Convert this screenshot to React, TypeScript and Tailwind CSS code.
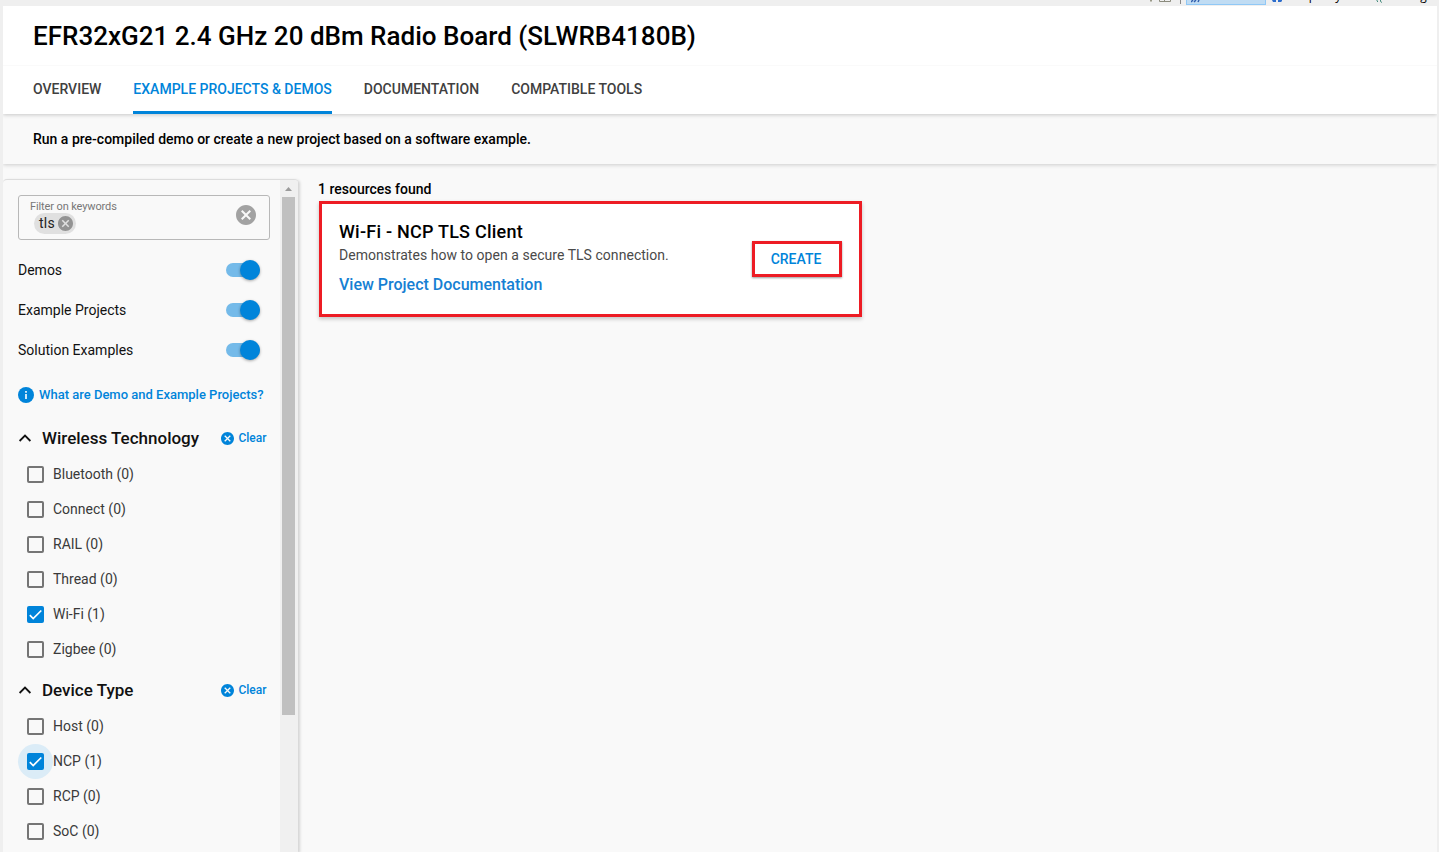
import React from "react";

const tabs = ["OVERVIEW", "EXAMPLE PROJECTS & DEMOS", "DOCUMENTATION", "COMPATIBLE TOOLS"];
const toggles = ["Demos", "Example Projects", "Solution Examples"];

type Option = { label: string; checked?: boolean; focused?: boolean };

const wireless: Option[] = [
  { label: "Bluetooth (0)" },
  { label: "Connect (0)" },
  { label: "RAIL (0)" },
  { label: "Thread (0)" },
  { label: "Wi-Fi (1)", checked: true },
  { label: "Zigbee (0)" },
];
const devices: Option[] = [
  { label: "Host (0)" },
  { label: "NCP (1)", checked: true, focused: true },
  { label: "RCP (0)" },
  { label: "SoC (0)" },
];

function CancelIcon({ className }: { className: string }) {
  return (
    <svg viewBox="2 2 20 20" className={className} fill="currentColor">
      <path d="M12 2C6.47 2 2 6.47 2 12s4.47 10 10 10 10-4.47 10-10S17.53 2 12 2zm5 13.59L15.59 17 12 13.41 8.41 17 7 15.59 10.59 12 7 8.41 8.41 7 12 10.59 15.59 7 17 8.41 13.41 12 17 15.59z" />
    </svg>
  );
}

function Toggle() {
  return (
    <div className="flex h-[14px] w-[34px] items-center justify-end rounded-full bg-[#74bae9]">
      <div className="h-5 w-5 shrink-0 rounded-full bg-[#0084da] shadow-[0_1px_3px_rgba(0,0,0,0.35)]" />
    </div>
  );
}

function Checkbox({ option }: { option: Option }) {
  return (
    <div className="flex h-[35px] items-center pl-[9px]">
      <div
        className={
          option.focused
            ? "mt-[2px] flex h-[35px] w-[35px] shrink-0 items-center justify-center rounded-full bg-[#dbecf7]"
            : "mt-[2px] flex h-[35px] w-[35px] shrink-0 items-center justify-center"
        }
      >
        {option.checked ? (
          <div className="flex h-[17px] w-[17px] items-center justify-center rounded-[2px] bg-[#0084da]">
            <svg viewBox="0 0 17 17" className="h-[17px] w-[17px]" fill="none" stroke="#fff" strokeWidth="1.7">
              <path d="M2.8 9.2 6.2 12.5 14.3 4.5" />
            </svg>
          </div>
        ) : (
          <div className="h-[17px] w-[17px] rounded-[2px] border-2 border-[#757575]" />
        )}
      </div>
      <span className="text-[14px] leading-5 text-[#3a3a3a]">{option.label}</span>
    </div>
  );
}

function Group({ title, options }: { title: string; options: Option[] }) {
  return (
    <section className="-ml-[9px] mb-[6px]">
      <div className="flex h-[36px] items-center pl-[9px]">
        <svg viewBox="0 0 14 14" className="h-[14px] w-[14px]" fill="none" stroke="#111" strokeWidth="1.8">
          <path d="M1.6 10 7 4.6 12.4 10" />
        </svg>
        <h2 className="ml-[10px] text-[17px] leading-6 font-medium text-[#111]">{title}</h2>
        <button className="mr-[13.5px] ml-auto flex items-center text-[12px] leading-4 font-medium text-[#0084da]">
          <CancelIcon className="mt-px mr-1 h-[13px] w-[13px]" />
          Clear
        </button>
      </div>
      <div>
        {options.map((o) => (
          <Checkbox key={o.label} option={o} />
        ))}
      </div>
    </section>
  );
}

function Sidebar() {
  return (
    <aside className="flex h-[673px] w-[295px] shrink-0 overflow-hidden rounded-t-[4px] border-t border-[#dcdcdc] bg-[#f9f9f9] shadow-[2px_1px_3px_rgba(0,0,0,0.15)]">
      <div className="w-[277px] shrink-0 pt-[15px] pl-[15px]">
        <div className="flex h-[45px] w-[252px] items-center rounded-[3px] border border-[#b8b8b8] pl-[11px]">
          <div className="h-[37px]">
            <div className="pt-px text-[11px] leading-[14px] tracking-[-0.12px] text-[#777]">Filter on keywords</div>
            <div className="-mt-px ml-1 flex h-[21px] w-[42px] items-center rounded-full bg-[#e0e0e0] pl-[5px] text-[14px] tracking-[0.2px] text-[#222]">
              tls
              <CancelIcon className="ml-[3px] h-[15px] w-[15px] text-[#939393]" />
            </div>
          </div>
          <CancelIcon className="mr-[13px] mb-[5px] ml-auto h-5 w-5 text-[#a2a2a2]" />
        </div>
        <div className="mt-[10px]">
          {toggles.map((t) => (
            <div key={t} className="flex h-10 w-[242px] items-center justify-between text-[14px] text-[#111]">
              {t}
              <Toggle />
            </div>
          ))}
        </div>
        <a className="mt-[17px] flex h-[16px] items-center text-[13px] font-medium text-[#0084da]">
          <svg viewBox="0 0 16 16" className="mr-[5px] h-4 w-4">
            <circle cx="8" cy="8" r="8" fill="#0084da" />
            <path d="M8 7v5M8 4v1.7" stroke="#fff" strokeWidth="1.6" />
          </svg>
          What are Demo and Example Projects?
        </a>
        <div className="mt-[17px]">
          <Group title="Wireless Technology" options={wireless} />
          <Group title="Device Type" options={devices} />
        </div>
      </div>
      <div className="flex w-[18px] flex-col bg-[#f0f0f0] pl-[2px]">
        <svg viewBox="0 0 13 17" className="h-[17px] w-[13px] shrink-0">
          <path d="M3 11h7L6.5 7z" fill="#9b9b9b" />
        </svg>
        <div className="h-[518px] w-[13px] bg-[#c0c0c0]" />
      </div>
    </aside>
  );
}

function PerspectiveBar() {
  return (
    <div className="flex h-[6px] items-start overflow-hidden bg-[#efefef] pl-[1149px] font-['Open_Sans',sans-serif] text-[12px] leading-4 text-black">
      <svg viewBox="0 0 34 6" className="h-[6px] w-[34px] shrink-0" fill="none">
        <path d="M1 0h2v1.500H1z" fill="#999988" />
        <path d="M10.500 0v1.500h11V0M15.500 0v1" stroke="#8b8b7d" />
        <path d="M31.500 0v4" stroke="#888" />
      </svg>
      <div className="ml-[3px] h-[5px] w-[80px] shrink-0 border border-t-0 border-[#90c8f6] bg-[#c0dcf3]">
        <svg viewBox="0 0 16 4" className="ml-1 h-1 w-4" fill="none" stroke="#315fae" strokeWidth="1.500">
          <path d="M0 2 2 0M3 2 5 0M7 2 8 0" />
        </svg>
      </div>
      <svg viewBox="0 0 12 6" className="ml-[6px] h-[6px] w-3 shrink-0" fill="#2d6dcc">
        <path d="M0 0h4v2H1zM6 0h4v1l-1 1H6z" />
      </svg>
      <span className="-mt-[12px] ml-[4px] w-[81px] shrink-0 whitespace-nowrap">Simplicity IDE</span>
      <svg viewBox="0 0 8 6" className="ml-[7px] h-[6px] w-2 shrink-0" fill="none" stroke="#438a7c">
        <path d="M1 0v1l1 1M4.500 0v1.500l1.500 1" />
      </svg>
      <span className="-mt-[12px] ml-[6px]">Debug</span>
    </div>
  );
}

export default function App() {
  return (
    <div className="h-[852px] w-[1439px] overflow-hidden bg-[#efefef] font-['Roboto',sans-serif]">
      <PerspectiveBar />
      <div className="ml-[3px] h-[846px] w-[1434px] overflow-hidden bg-[#f9f9f9]">
        <header className="relative bg-white shadow-[0_1px_4px_rgba(0,0,0,0.2)]">
          <h1 className="h-[60px] border-b border-[#fafafa] pl-[30px] text-[26px] leading-[60px] font-medium tracking-[0.01px] text-black">
            EFR32xG21 2.4 GHz 20 dBm Radio Board (SLWRB4180B)
          </h1>
          <nav className="flex h-[48px] gap-8 pl-[30px] text-[14px] leading-[47px] font-medium">
            {tabs.map((t, i) => (
              <div
                key={t}
                className={i === 1 ? "border-b-[3px] border-[#0084da] text-[#0084da]" : "text-[#404040]"}
              >
                {t}
              </div>
            ))}
          </nav>
        </header>
        <p className="h-[50px] pl-[30px] text-[14px] leading-[50px] font-medium text-black shadow-[0_1px_4px_rgba(0,0,0,0.18)]">
          Run a pre-compiled demo or create a new project based on a software example.
        </p>
        <main className="flex pt-[15px]">
          <Sidebar />
          <section className="ml-[21px] w-[543px]">
            <p className="-ml-px text-[14px] leading-5 font-medium text-black">1 resources found</p>
            <article className="mt-[2px] flex h-[116px] items-center border-[3px] border-[#ed1c24] bg-white pr-[17px] pl-[17px] shadow-[0_2px_4px_rgba(0,0,0,0.22)]">
              <div className="h-[84px]">
                <h3 className="pt-[4px] text-[18px] leading-[22px] font-medium tracking-[0.23px] text-black">Wi-Fi - NCP TLS Client</h3>
                <p className="pt-[1px] text-[14px] leading-[22px] tracking-[0.04px] text-[#4a4a4a]">
                  Demonstrates how to open a secure TLS connection.
                </p>
                <a className="mt-[9px] block text-[16px] leading-[20px] font-medium text-[#1680d3]">
                  View Project Documentation
                </a>
              </div>
              <button className="ml-auto h-[36px] w-[90px] border-[3px] border-[#ed1c24] bg-white pr-[2px] text-[14px] font-medium text-[#0084da] shadow-[0_1px_2px_rgba(0,0,0,0.4)]">
                CREATE
              </button>
            </article>
          </section>
        </main>
      </div>
    </div>
  );
}
